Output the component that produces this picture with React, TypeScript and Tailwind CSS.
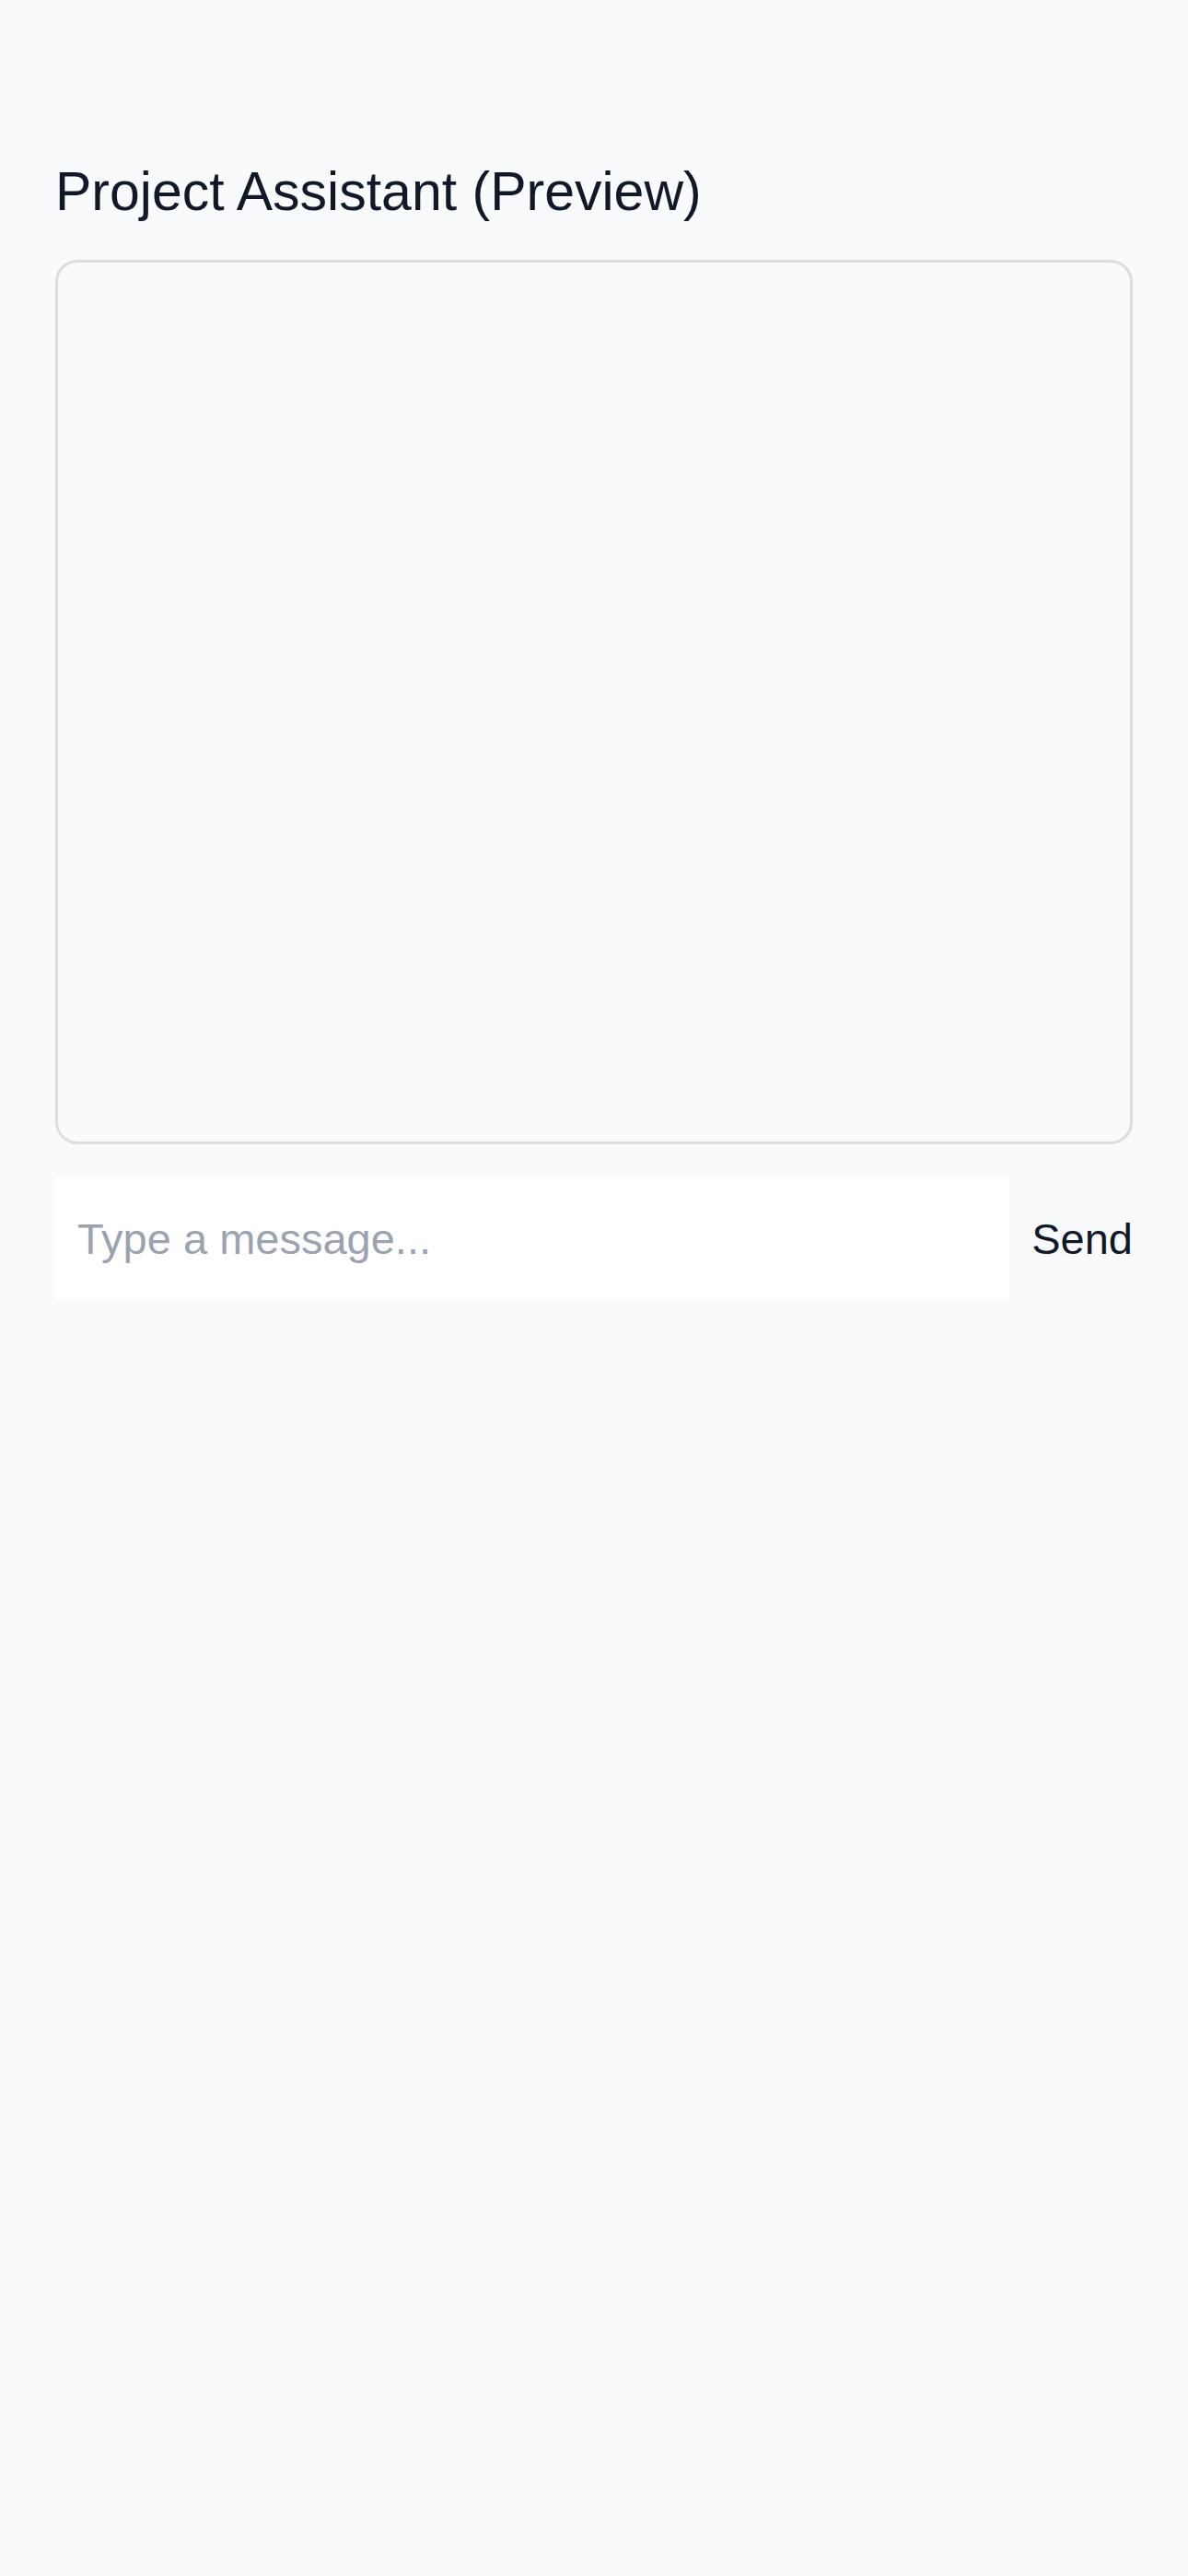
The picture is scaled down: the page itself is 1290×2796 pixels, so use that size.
import { useState } from 'react';

export default function App() {
  const [message, setMessage] = useState('');

  return (
    <div
      className="min-h-screen w-full bg-[#f9fafb] px-[60px] pt-[166px]"
      style={{ fontFamily: '"Liberation Sans", Arial, sans-serif' }}
    >
      <h1 className="text-[59px] leading-[84px] font-normal text-[#111827]">
        Project Assistant (Preview)
      </h1>

      {/* Chat log */}
      <div className="mt-[32px] h-[960px] rounded-[24px] border-[3px] border-[#dcdde0] bg-[#f9fafb] overflow-y-auto" />

      {/* Composer */}
      <div className="mt-[36px] flex items-center gap-[24px]">
        <input
          value={message}
          onChange={(e) => setMessage(e.target.value)}
          placeholder="Type a message..."
          className="h-[132px] flex-1 min-w-0 bg-white px-[24px] text-[47px] text-[#111827] placeholder:text-[#9ca3af] outline-none"
        />
        <button className="text-[47px] leading-none text-[#111827]">Send</button>
      </div>
    </div>
  );
}
